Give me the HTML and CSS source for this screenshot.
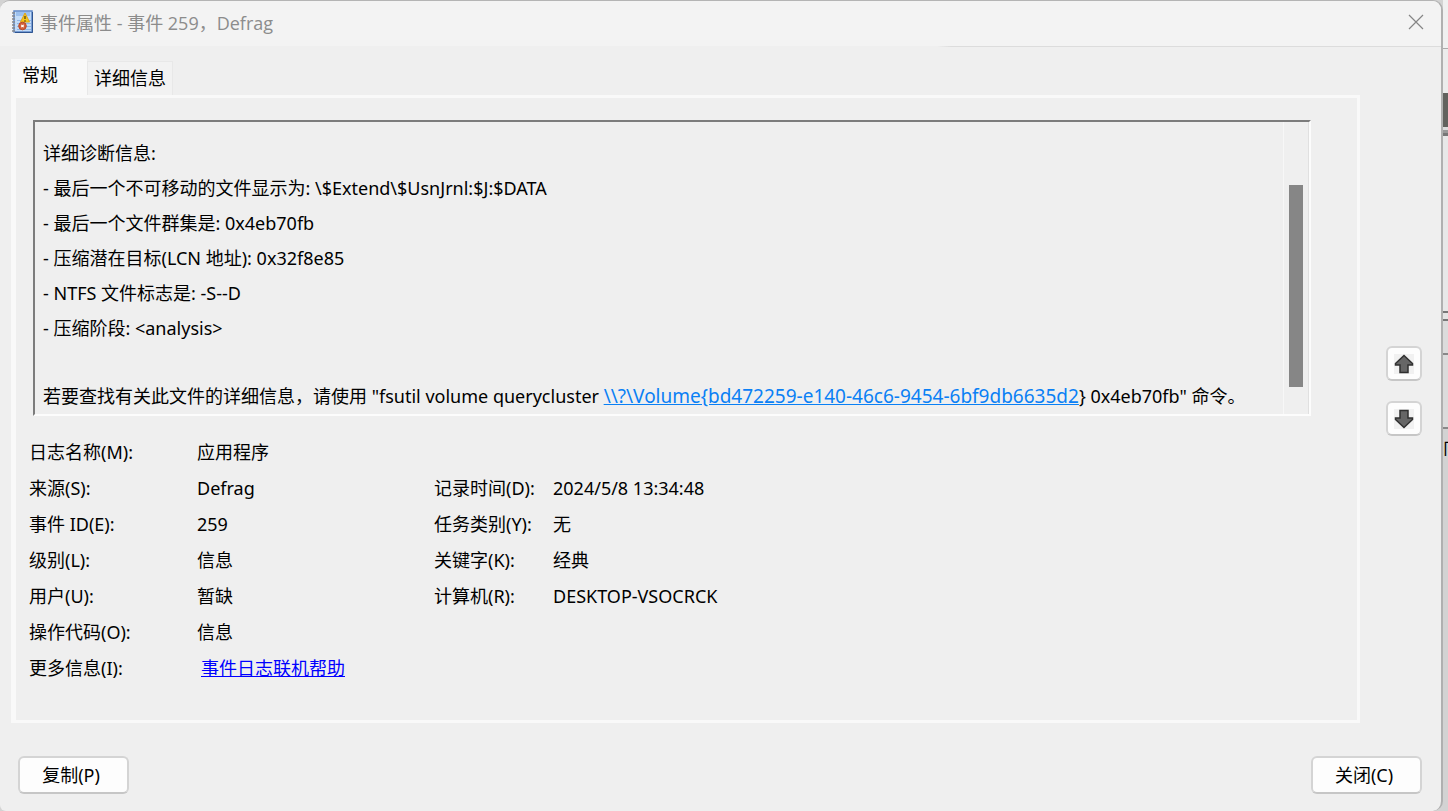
FILE: index.html
```html
<!DOCTYPE html>
<html lang="zh-CN">
<head>
    <meta charset="UTF-8">
    <meta name="viewport" content="width=device-width, initial-scale=1.0">
    <title>事件属性 - 事件 259，Defrag</title>
    <link rel="stylesheet" href="styles.css">
</head>
<body>
    <div class="desktop">
        <main class="dialog">
            <!-- Title bar -->
            <header class="titlebar">
                <svg class="app-icon" viewBox="0 0 22 24" aria-hidden="true">
                    <rect x="3" y="1" width="18" height="21" fill="#c3dcf8" stroke="#5f88c8" stroke-width="1.5"/>
                    <path d="M5 2h14v4H5z" fill="#9cc0ee"/>
                    <path d="M6 10.500h14M6 13.500h14M6 16.500h14M6 19.500h14" stroke="#8fb5e6"/>
                    <path d="M4 22.500h17.500V2" fill="none" stroke="#2f5591"/>
                    <path d="M1 3h3M1 6h3M1 9h3M1 12h3M1 15h3M1 18h3M1 21h3" stroke="#85888f" stroke-width="1.500"/>
                    <path d="M14 3l4.500 9h-9z" fill="#f6c61c" stroke="#e0a412" stroke-linejoin="round"/>
                    <path d="M14 6v3M14 10.300v1.400" stroke="#6b5510" stroke-width="1.500"/>
                    <circle cx="11.500" cy="16" r="3.800" fill="#d2603c" stroke="#b8492a"/>
                    <path d="M10.300 14.800l2.400 2.400M12.700 14.800l-2.400 2.400" stroke="#fff" stroke-width="1.200"/>
                </svg>
                <h1 class="title">事件属性 - 事件 259，Defrag</h1>
                <button class="close-btn" type="button" aria-label="关闭">
                    <svg viewBox="0 0 16 16" aria-hidden="true"><path d="M1 1l14 14M15 1L1 15" stroke="#858585" stroke-width="1.200"/></svg>
                </button>
            </header>

            <!-- Tabs -->
            <div class="tabs" role="tablist">
                <button class="tab active" type="button" role="tab" aria-selected="true">常规</button>
                <button class="tab" type="button" role="tab" aria-selected="false">详细信息</button>
            </div>

            <div class="content">
                <section class="panel" role="tabpanel">
                    <div class="message">
                        <div class="message-text">
                            <p>详细诊断信息:</p>
                            <p>- 最后一个不可移动的文件显示为: \$Extend\$UsnJrnl:$J:$DATA</p>
                            <p>- 最后一个文件群集是: 0x4eb70fb</p>
                            <p>- 压缩潜在目标(LCN 地址): 0x32f8e85</p>
                            <p>- NTFS 文件标志是: -S--D</p>
                            <p>- 压缩阶段: &lt;analysis&gt;</p>
                            <p class="hint">若要查找有关此文件的详细信息，请使用 "fsutil volume querycluster <a href="#">\\?\Volume{bd472259-e140-46c6-9454-6bf9db6635d2</a>} 0x4eb70fb" 命令。</p>
                        </div>
                        <div class="scrollbar"><div class="thumb"></div></div>
                    </div>

                    <!-- Event fields -->
                    <dl class="fields">
                        <dt>日志名称(M):</dt><dd class="wide">应用程序</dd>
                        <dt>来源(S):</dt><dd>Defrag</dd>
                        <dt>记录时间(D):</dt><dd>2024/5/8 13:34:48</dd>
                        <dt>事件 ID(E):</dt><dd>259</dd>
                        <dt>任务类别(Y):</dt><dd>无</dd>
                        <dt>级别(L):</dt><dd>信息</dd>
                        <dt>关键字(K):</dt><dd>经典</dd>
                        <dt>用户(U):</dt><dd>暂缺</dd>
                        <dt>计算机(R):</dt><dd>DESKTOP-VSOCRCK</dd>
                        <dt>操作代码(O):</dt><dd class="wide">信息</dd>
                        <dt>更多信息(I):</dt><dd class="wide"><a class="help-link" href="#">事件日志联机帮助</a></dd>
                    </dl>
                </section>

                <nav class="arrows">
                    <button class="btn arrow-btn" type="button" aria-label="上一个事件">
                        <svg viewBox="0 0 20 20" aria-hidden="true"><path class="arrow-bg" d="M0 0h20v20H0z"/><path class="arrow" d="M10 1.500l8.500 8v1.500H14v7.500H6V11H1.500V9.500z"/></svg>
                    </button>
                    <button class="btn arrow-btn" type="button" aria-label="下一个事件">
                        <svg viewBox="0 0 20 20" aria-hidden="true"><path class="arrow-bg" d="M0 0h20v20H0z"/><path class="arrow" d="M10 18.500l8.500-8V9H14V1.500H6V9H1.500v1.500z"/></svg>
                    </button>
                </nav>
            </div>

            <footer class="footer">
                <button class="btn text-btn" type="button">复制(P)</button>
                <button class="btn text-btn" type="button">关闭(C)</button>
            </footer>
        </main>

        <!-- Edge of the window behind -->
        <div class="behind">
            <div class="behind-top"></div>
            <div class="behind-bar"></div>
            <div class="behind-dark"></div>
            <div class="behind-lines"></div>
            <div class="behind-list"></div>
            <div class="behind-head"></div>
            <div class="behind-row"></div>
            <div class="behind-row tall"></div>
            <div class="behind-label">向</div>
            <div class="behind-rest"></div>
        </div>
    </div>
</body>
</html>
```
FILE: styles.css
```css
* {
    box-sizing: border-box;
}
body {
    margin: 0;
    background: #d3d3d3;
    color: #000;
    font-family: "Noto Sans", "Noto Sans CJK SC", sans-serif;
    font-size: 18px;
}
h1, p, dl, dd {
    margin: 0;
}
button {
    font: inherit;
    color: inherit;
}
.desktop {
    display: flex;
    min-height: 100vh;
}
.dialog {
    flex: 1;
    min-width: 0;
    display: flex;
    flex-direction: column;
    background: #efefef;
    border-top: 1px solid #b4b4b4;
    border-right: 2px solid #b0b0b0;
    border-radius: 10px 10px 10px 6px;
    overflow: hidden;
}

/* Title bar */
.titlebar {
    display: flex;
    align-items: center;
    height: 46px;
    padding: 0 17px 3px 11px;
    background: #f3f3f3;
    border-bottom: 1px solid;
    border-image: linear-gradient(90deg, #efefef 65%, #dcdcdc 66%) 1;
}
.app-icon {
    width: 22px;
    height: 24px;
}
.title {
    flex: 1;
    margin-left: 7px;
    color: #8c8c8c;
    font-family: "Open Sans", "Noto Sans CJK SC", sans-serif;
    font-size: 18px;
    font-weight: normal;
}
.close-btn {
    display: flex;
    padding: 0;
    border: none;
    background: none;
}
.close-btn svg {
    width: 16px;
    height: 16px;
}

/* Tabs */
.tabs {
    display: flex;
    align-items: flex-end;
    padding: 12px 0 0 11px;
}
.tab {
    height: 34px;
    padding: 0 6px 2px;
    border: 1px solid #e8e8e8;
    border-bottom: none;
    background: #f2f2f2;
    line-height: 24px;
}
.tab.active {
    width: 76px;
    height: 36px;
    padding: 0 11px 5px;
    border: none;
    background: #f9f9f9;
    text-align: left;
}

/* Content */
.content {
    display: flex;
}
.panel {
    flex: 1;
    min-width: 0;
    height: 628px;
    padding: 22px 46px 0 17px;
    margin-left: 11px;
    border: 3px solid #f9f9f9;
    border-left-width: 5px;
}
.message {
    display: flex;
    height: 296px;
    border: 2px solid #fcfcfc;
    border-top-color: #7c7c7c;
    border-left-color: #7c7c7c;
    overflow: hidden;
}
.message-text {
    flex: 1;
    min-width: 0;
    padding: 14px 0 0 8px;
    line-height: 35px;
    white-space: nowrap;
}
.message-text a {
    color: #0a80f5;
    font-size: 19px;
    line-height: 1;
}
.message-text .hint {
    margin-top: 33px;
}
.scrollbar {
    width: 26px;
    padding: 63px 5px 0;
    border-left: 1px solid #f7f7f7;
    border-right: 1px solid #e0e0e0;
}
.thumb {
    height: 202px;
    background: #868686;
}
.fields {
    display: grid;
    grid-template-columns: 168px 237px 119px 1fr;
    grid-auto-rows: 36px;
    margin-top: 18px;
    margin-left: -4px;
    line-height: 36px;
}
.fields .wide {
    grid-column: 2 / -1;
}
.help-link {
    margin-left: 4px;
    color: #00f;
}

/* Buttons */
.btn {
    padding: 0;
    border: 2px solid #d4d4d4;
    border-bottom-color: #c6c6c6;
    border-radius: 6px;
    background: #fdfdfd;
}
.text-btn {
    width: 111px;
    height: 38px;
    padding: 0 5px 2px 0;
}
.arrows {
    display: flex;
    flex-direction: column;
    gap: 20px;
    padding: 251px 19px 0 26px;
}
.arrow-btn {
    display: flex;
    align-items: center;
    justify-content: center;
    width: 36px;
    height: 35px;
}
.arrow-btn svg {
    width: 20px;
    height: 20px;
}
.arrow-bg {
    fill: #f1f1f1;
}
.arrow {
    fill: #666;
    stroke: #303030;
    stroke-width: 1.5px;
}
.footer {
    display: flex;
    justify-content: space-between;
    padding: 33px 19px 17px 18px;
}

/* Window behind */
.behind {
    display: flex;
    flex-direction: column;
    width: 5px;
    overflow: hidden;
}
.behind-top {
    height: 49px;
    background: #f0f0f0;
    border-bottom: 1px solid #aaa;
}
.behind-bar {
    height: 44px;
    background: #ececec;
}
.behind-dark {
    height: 34px;
    background: #62625e;
}
.behind-lines {
    height: 9px;
    border-top: 3px solid #ddd;
    border-bottom: 3px solid #777;
    background: #999;
}
.behind-list {
    height: 175px;
    background: #e8e8e8;
}
.behind-head {
    height: 10px;
    border-top: 2px solid #777;
    border-bottom: 2px solid #777;
    background: #e4e4e4;
}
.behind-row {
    height: 34px;
    background: #dcdcdc;
    border-bottom: 2px solid #888;
}
.behind-row.tall {
    height: 74px;
}
.behind-label {
    height: 30px;
    line-height: 36px;
}
.behind-rest {
    flex: 1;
    background: #d3d3d3;
}
```
